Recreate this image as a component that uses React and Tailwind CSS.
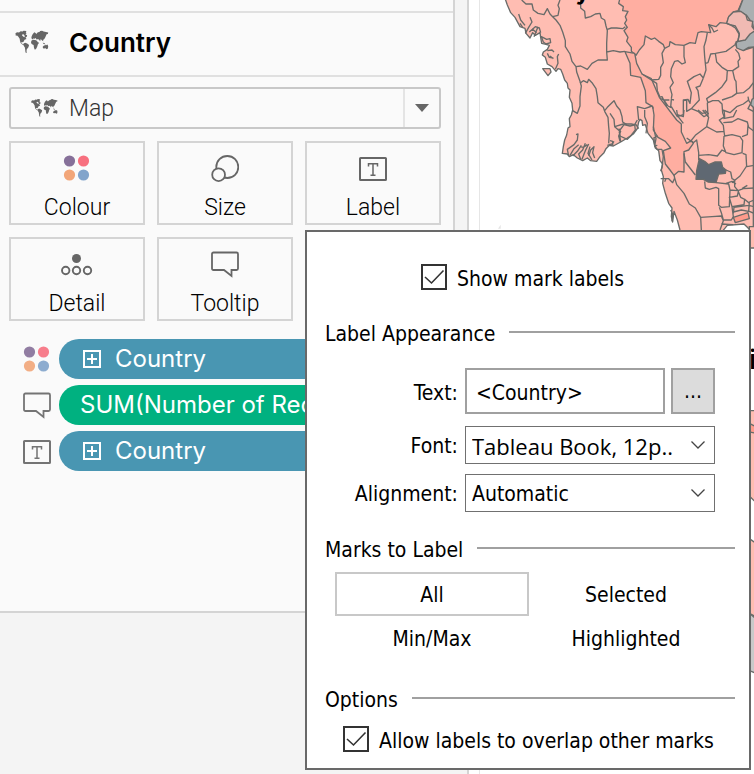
// App.jsx
import { useState } from "react";

const CARDS = [
  { label: "Colour", Icon: ColourIcon },
  { label: "Size", Icon: SizeIcon },
  { label: "Label", Icon: LabelIcon },
  { label: "Detail", Icon: DetailIcon },
  { label: "Tooltip", Icon: TooltipIcon },
];

const PILLS = [
  { text: "Country", Icon: ColourIcon, expandable: true, color: "bg-[#4996b2]" },
  { text: "SUM(Number of Records)", Icon: TooltipIcon, expandable: false, color: "bg-[#00b180]" },
  { text: "Country", Icon: LabelIcon, expandable: true, color: "bg-[#4996b2]" },
];

const MARK_MODES = ["All", "Selected", "Min/Max", "Highlighted"];

function WorldIcon({ className }) {
  return (
    <svg viewBox="44 94 104 74" className={className} fill="#666" aria-hidden="true">
      <path
        fillRule="evenodd"
        d="M45 104l5-3 6 1 5-4 6 1 3-3 9 1-2 4 2 3-3 4 5 2-1 5-4 2 3 5-6 2-2 5-3 3-4-1-1 3 4 3 4 1 1 3-6-2-5-5-2-6-1-7-4-6-4-4-4 1zM67 107l4 1 3 5-2 3-4-3-3-3z"
      />
      <path d="M70 136l5-3 6 3 6 4-2 7-5 6-1 6 1 6-4-2-1-8-1-7-4-6z" />
      <path d="M94 119l1-6 3-6 5-6 4 2 2 3 5-5 5-1 2-3 6-1 5 3 7 1 7 2-1 4-4 1-2 5-2 4-3 6-4 3 1 4-4-3-4-4-2 7-3-5-4-2-3 2-4-5-3 2-4-1-3 3z" />
      <path d="M94 127l5-3 7 1 5 2 3 5 4 1-4 6-2 7-4 7-4 1-2-6-1-8-5-2-3-4z" />
      <path d="M129 146l4-4 4-1 2-2 2 2 3-2 2 6-1 6-4 2-3-3-5 1-3-1zM129 133l5 1 3 4-5-1z" />
    </svg>
  );
}

function ColourIcon() {
  return (
    <svg width="28" height="28" viewBox="0 0 28 28" aria-hidden="true">
      <circle cx="6.500" cy="7" r="5.6" fill="#867099" />
      <circle cx="20.500" cy="7" r="5.6" fill="#f7707f" />
      <circle cx="6.500" cy="21" r="5.6" fill="#f2a679" />
      <circle cx="20.500" cy="21" r="5.6" fill="#82a4cb" />
    </svg>
  );
}

function SizeIcon() {
  return (
    <svg width="28" height="28" viewBox="0 0 28 28" fill="#fafafa" stroke="#666" strokeWidth="1.8" aria-hidden="true">
      <circle cx="16.3" cy="13" r="11" />
      <circle cx="7.6" cy="20.700" r="6.4" />
    </svg>
  );
}

function LabelIcon() {
  return (
    <svg width="28" height="28" viewBox="0 0 28 28" fill="none" stroke="#666" aria-hidden="true">
      <rect x="1" y="4" width="26" height="22" rx="0.6" strokeWidth="2" />
      <path d="M9.500 12.500V9.800H18.500V12.500M14 9.800V21M11.500 21.200H16.500" strokeWidth="1.5" />
    </svg>
  );
}

function DetailIcon() {
  return (
    <svg width="32" height="28" viewBox="0 0 32 28" fill="none" stroke="#666" strokeWidth="1.9" aria-hidden="true">
      <circle cx="15.500" cy="8.500" r="4.500" fill="#666" stroke="none" />
      <circle cx="4.700" cy="20.500" r="3.700" />
      <circle cx="15.500" cy="20.500" r="3.700" />
      <circle cx="26.500" cy="20.500" r="3.700" />
    </svg>
  );
}

function TooltipIcon() {
  return (
    <svg width="28" height="28" viewBox="0 0 28 28" fill="none" stroke="#666" strokeWidth="1.8" aria-hidden="true">
      <path d="M2.500 2.500H25.500Q27 2.500 27 4V18.500Q27 20 25.500 20H20.500V26L13 20H2.500Q1 20 1 18.500V4Q1 2.500 2.500 2.500Z" />
    </svg>
  );
}

function ExpandIcon() {
  return (
    <svg width="18" height="18" viewBox="0 0 18 18" fill="none" stroke="#fff" strokeWidth="2" className="shrink-0" aria-hidden="true">
      <rect x="1" y="1" width="16" height="16" />
      <path d="M4 9H14M9 4V14" />
    </svg>
  );
}

function MarksCard() {
  return (
    <section className="border-r-2 border-b-2 border-[#d4d4d4] bg-[#fafafa] font-[Inter,sans-serif] pb-[140px]">
      <div className="h-[11px]" />
      <h2 className="flex items-center gap-5 border-y-2 border-[#e0e0e0] pb-1 pl-[15px] h-[66px] text-[26px] font-semibold text-black">
        <WorldIcon className="w-[34px] h-6" />
        Country
      </h2>

      <div className="pt-[10px] px-[9px] pr-3">
        <button className="flex h-[42px] w-full items-center rounded-[3px] border-2 border-[#c8c8c8] font-[Roboto,sans-serif] text-[23px] font-light text-[#333]">
          <WorldIcon className="ml-5 mr-[11px] w-[27px] h-5" />
          <span className="flex-1 pt-[2px] text-left">Map</span>
          <span className="flex h-full w-9 items-center justify-center border-l-2 border-[#e4e4e4]">
            <svg width="14" height="8" viewBox="0 0 14 8" fill="#666" aria-hidden="true">
              <path d="M0 0H14L7 8Z" />
            </svg>
          </span>
        </button>

        <div className="mt-3 grid grid-cols-3 gap-3">
          {CARDS.map(({ label, Icon }) => (
            <button
              key={label}
              className="flex h-[84px] flex-col items-center border-2 border-[#d4d4d4] pt-[11px] font-[Roboto,sans-serif] text-[23px] leading-7 font-light text-black"
            >
              <Icon />
              <span className="mt-3">{label}</span>
            </button>
          ))}
        </div>

        <ul className="mt-[18px] space-y-[6px] pl-[14px]">
          {PILLS.map(({ text, Icon, expandable, color }, i) => (
            <li key={i} className="flex items-center gap-2">
              <span className="shrink-0 opacity-90">
                <Icon />
              </span>
              <button className={`${color} flex h-10 min-w-0 flex-1 items-center gap-[14px] rounded-full text-[24px] text-white ${expandable ? "pl-6" : "pl-[21px]"}`}>
                {expandable && <ExpandIcon />}
                <span className="truncate">{text}</span>
              </button>
            </li>
          ))}
        </ul>
      </div>
    </section>
  );
}

function RegionMap() {
  return (
    <svg viewBox="30 0 822 2322" preserveAspectRatio="xMinYMin slice" className="absolute inset-0 h-full w-full" aria-hidden="true">
      <g fill="#ffbdb2" stroke="#696b69" strokeWidth="4" strokeLinejoin="round">
        {/* mainland */}
        <path d="M105 -5L112 15 122 38 135 52 150 80 165 85 168 100 180 114 188 98 196 106 210 98 212 112 215 130 228 133 238 136 232 148 220 156 217 165 226 172 232 192 246 200 258 214 264 206 272 208 278 222 284 240 292 250 294 264 300 270 298 292 306 310 308 330 304 345 298 356 300 380 294 384 290 405 284 420 280 440 277 460 292 462 298 470 310 464 322 474 338 482 352 474 362 482 380 484 390 470 402 458 408 446 418 436 430 438 452 426 472 414 490 402 502 386 506 366 510 358 516 362 518 376 526 374 534 400 550 420 556 444 566 452 570 482 578 492 574 510 580 530 578 550 586 580 596 610 606 624 604 650 608 666 612 634 622 660 630 690 640 710H850V-5Z" />
        <path d="M218 206L240 206 243 216 234 227Z" />

        {/* darker regions */}
        <path fill="#ffaea1" d="M450 -5L446 10 460 20 458 32 474 34 466 50 470 60 464 70 472 82 462 92 474 112 470 124 484 142 484 154 498 166 508 150 522 134 526 108 544 118 554 114 566 124 580 134 584 145 598 138 600 125 616 134 642 136 660 128 676 130 684 98 694 95 722 98 716 74 738 80 750 68 770 70 776 50 790 36 804 32 820 -5Z" />
        <path fill="#ffaea1" d="M465 155L494 160 500 190 516 222 544 236 556 264 568 292 620 360 634 372 634 396 650 430 664 422 670 430 656 450 642 455 642 516 626 514 612 526 600 510 586 492 580 452 602 444 586 424 564 412 550 390 552 345 548 320 528 308 526 272 512 232 482 226 480 190Z" />
        <path fill="#aaafb1" d="M820 -5L806 32 830 46 848 72 856 110V140L822 150 800 142 796 130H860V-5Z" />
        <path fill="#aaafb1" d="M860 140L836 142 820 152 800 144 798 126 824 118 850 90 860 92Z" />
        <path fill="#f0bab3" d="M770 70L776 50 790 36 812 34 828 46 832 60 848 64 846 80 855 92 840 102 826 120 804 124 808 100 796 78 780 74Z" />
        <path fill="#5f6872" d="M688 476L704 484 716 494 734 486 754 486 758 502 768 510 766 520 746 522 738 548 714 546 700 538 678 538 680 512Z" />
        <path fill="#ff9b8b" d="M790 652L834 638 838 656 796 668Z" />
        <path fill="#fff" stroke="#696b69" d="M752 700L772 676 822 672 838 688 838 710Z" />
        <path fill="#aaafb1" d="M860 290L846 298 842 314 850 322H860Z" />
      </g>

      {/* inner borders */}
      <g fill="none" stroke="#696b69" strokeWidth="4" strokeLinejoin="round">
        <path d="M155 0L168 12 186 12 190 30 204 40 222 44 232 26 240 42 248 50 264 46 268 26 264 16 270 0M248 50L258 60 270 76 278 96 286 122 286 140 300 162 306 184 318 200 320 216 330 244 334 258 330 290 330 318 322 340 308 332" />
        <path d="M332 0L332 24 344 34 346 54 362 50 376 42 390 40 394 54 404 60 408 78 412 92 410 130 410 156 412 180 384 180 366 190 352 208 332 198 318 200M412 88L424 84 440 84 458 86 466 80M410 156L430 152 450 156 465 154M330 250L340 242 352 248 356 238 366 248 378 266 382 290 384 308 400 322 404 334 414 352 416 380 418 400 416 430M404 332L412 322 432 302 440 318 450 330 456 350 458 366 470 374" />
        <path d="M146 42L152 60 165 76M150 70L158 82M180 52L186 66 176 82 166 100M178 96L196 80 208 84 212 98M186 86L200 98M192 110L204 80M214 110L230 118 240 116 242 128 228 132 220 126ZM232 152L246 150 252 156M232 160L238 172 250 174M240 168L250 176M256 208L264 190 262 170 266 162" />
        <path d="M318 404L324 402 322 420 312 434 292 448 296 468M326 434L312 446 300 466M334 436L322 454 308 468M346 430L338 450 326 462 332 478M356 432L346 452 336 478M330 440L340 442 352 434M356 468L362 450 372 440 368 458 374 474M360 440L354 460 366 480M412 436L426 432 432 424" />
        <path d="M446 386L452 394 446 408 450 424M450 390L462 374 480 378 498 374 506 386M506 360L502 320 524 326 546 318 550 326M452 426L448 396" />
        <path d="M516 222L544 240 566 238 572 226 572 202 580 188 576 160 584 145M544 240L560 250 562 272 572 296 582 300 594 318 602 322 604 298 612 300M642 138L642 170 646 188 636 192 624 182 614 184 604 206 602 230 610 248 600 262 606 284 604 296M568 292L576 290 590 318M582 300L598 300M604 320L622 350 640 344 640 300 654 298 660 310 664 278 652 244 672 230 690 222 700 234M640 302L650 300 650 334 664 326 684 334 702 350 712 345M664 326L688 300 684 272 678 262 690 258 700 234M712 98L708 120 702 140 704 170 706 190 714 188 722 162 736 160 768 154 782 144 798 132M706 190L708 210 700 234M736 160L740 186 756 202 772 212 788 212 806 200 804 184 810 176 806 160 796 148M772 212L770 240 756 260 736 278 710 296 714 308 728 302 746 302 756 312 758 338 764 354M788 212L794 238 798 244 800 280 786 290 756 300M800 280L820 278 838 264 852 246M758 330L780 338 800 320 820 312 836 300 834 290M712 308L714 350M760 356L790 350 800 330M834 298L842 310 834 326 850 334M716 74L726 84 732 96 744 90M770 70L784 76 796 84 808 104 804 120 796 134" />
      </g>
      <g transform="translate(420 330)" fill="none" stroke="#696b69" strokeWidth="4" strokeLinejoin="round">
        <path d="M0 10L12 28 14 50 28 62 30 78 52 88 62 78 76 60 74 44 82 30M14 50L40 42 64 42 74 44M108 70L112 40 104 20 104 0M130 50L138 86 134 108 142 118 156 118M130 84L144 78M156 118L160 140 156 172 152 184M152 206L176 206 188 218 194 204 192 195M194 204L200 224 222 250 238 282 256 294 272 322M164 215L168 206M222 130L226 156 256 195M230 84L250 98 260 90 266 128 266 150M200 0L202 14 220 20 222 0M200 14L220 40M278 0L296 22 290 50 256 76 240 96M296 12L284 0M290 50L320 66 342 64 340 46 328 30 344 20 342 0M340 38L366 36 384 26 412 36 416 52 432 64M342 64L344 78 366 74 390 80 398 92 396 128 372 134 348 128 340 108 342 78M266 136L296 134 322 138 336 120 344 124M396 80L412 74 414 44M398 130L408 134 410 170 432 166M410 168L390 198 378 208 366 218M348 180L362 186 366 206 374 210 374 230 384 242 400 236 432 234M318 218L356 222 360 240 358 290 334 292 326 286 326 236 318 232 298 238 286 234 284 214M348 220L366 214 378 222M360 240L384 242 392 262 404 268 402 284 366 290 358 262 382 258 386 240M366 290L370 320 364 330 340 330 334 308 328 292M370 310L372 292 416 286 432 290M370 306L394 300 416 304 418 276 432 270M418 304L432 310M272 322L306 320 334 318 340 332 330 360M272 322L274 360M334 342L370 344M404 268L418 280M396 236L412 226" />
        <path d="M132 84L134 108 142 106M182 300L188 312 186 334M0 92L8 94 8 106M264 0L276 10 290 8" />
      </g>

      {/* strip of coast further south */}
      <g fill="#ffbdb2" stroke="#696b69" strokeWidth="4">
        <path d="M838 680V744H858V680Z" />
        <path d="M838 1232V1488L858 1508V1232Z" />
        <path fill="#ff9b8b" d="M838 1270L858 1280V1300L838 1296Z" />
        <path d="M838 1616L858 1630V1850L838 1840Z" />
        <path fill="#c9c9c9" d="M838 1840L858 1856V2020L838 2012Z" />
      </g>
      <path d="M84 686L92 674 92 686Z" fill="#e4e4e4" />
      <g fill="#000" fontFamily="Inter, sans-serif" fontWeight="600" fontSize="78">
        <text x="316" y="-3">y</text>
        <text x="838" y="1107">i</text>
      </g>
    </svg>
  );
}

function CheckField({ label, className }) {
  return (
    <label className={`flex items-center gap-[10px] ${className}`}>
      <span className="grid">
        <input type="checkbox" defaultChecked className="peer col-start-1 row-start-1 size-[26px] appearance-none border-2 border-[#333] bg-white" />
        <svg
          viewBox="0 0 26 26"
          className="pointer-events-none invisible col-start-1 row-start-1 size-[26px] peer-checked:visible"
          fill="none"
          stroke="#333"
          strokeWidth="1.600"
          aria-hidden="true"
        >
          <path d="M4 13L10.500 19L22.500 6.500" />
        </svg>
      </span>
      <span className="pt-1">{label}</span>
    </label>
  );
}

function SectionTitle({ children, className }) {
  return (
    <h3 className={`flex h-7 items-center gap-[14px] ${className}`}>
      <span className="pt-1">{children}</span>
      <span className="h-[2px] flex-1 bg-[#a0a0a0]" />
    </h3>
  );
}

function SelectField({ id, value, className }) {
  return (
    <div className="grid items-center">
      <select id={id} className={`col-start-1 row-start-1 h-[38px] w-full appearance-none border border-[#707070] bg-white pt-[2px] pl-[6px] ${className}`}>
        <option>{value}</option>
      </select>
      <svg width="14" height="8" viewBox="0 0 14 8" className="pointer-events-none col-start-1 row-start-1 mr-[10px] justify-self-end" fill="none" stroke="#444" strokeWidth="1.300" aria-hidden="true">
        <path d="M0.500 0.500L7 7L13.500 0.500" />
      </svg>
    </div>
  );
}

function LabelPopup() {
  const [mode, setMode] = useState("All");

  return (
    <div className="absolute top-[230px] left-[305px] w-[446px] border-2 border-[#696969] bg-white pt-8 pr-[14px] pb-4 pl-[18px] font-['DejaVu_Sans_Condensed','DejaVu_Sans',sans-serif] text-[21px] leading-7 text-black">
      <CheckField label="Show mark labels" className="h-[26px] pl-24" />

      <SectionTitle className="mt-7">Label Appearance</SectionTitle>
      <div className="mt-[22px] grid grid-cols-[133px_250px] items-center gap-x-[7px]">
        <label htmlFor="label-text" className="pt-1 text-right">Text:</label>
        <div className="flex gap-[6px]">
          <input id="label-text" defaultValue="<Country>" className="h-[46px] w-0 flex-1 border-2 border-[#a0a0a0] pt-1 pl-[9px]" />
          <button aria-label="Edit text" className="h-[46px] w-11 border-2 border-[#a0a0a0] bg-[#dcdcdc]">...</button>
        </div>
        <label htmlFor="label-font" className="mt-3 pt-[2px] text-right">Font:</label>
        <div className="mt-3">
          <SelectField id="label-font" value="Tableau Book, 12p.." className="font-['Open_Sans',sans-serif] text-[22px]" />
        </div>
        <label htmlFor="label-align" className="mt-[10px] pt-[2px] text-right">Alignment:</label>
        <div className="mt-[10px]">
          <SelectField id="label-align" value="Automatic" className="" />
        </div>
      </div>

      <SectionTitle className="mt-[22px]">Marks to Label</SectionTitle>
      <div className="mt-[10px] grid grid-cols-2 pr-3 pl-[10px]">
        {MARK_MODES.map((m) => (
          <button
            key={m}
            onClick={() => setMode(m)}
            className={`h-11 border-2 pt-[2px] ${m === mode ? "border-[#c8c8c8]" : "border-transparent"}`}
          >
            {m}
          </button>
        ))}
      </div>

      <SectionTitle className="mt-6">Options</SectionTitle>
      <CheckField label="Allow labels to overlap other marks" className="mt-[14px] h-[26px] pl-[18px]" />
    </div>
  );
}

export default function App() {
  return (
    <div className="relative flex min-h-screen overflow-hidden bg-[#f4f4f4]">
      <div className="w-[455px] shrink-0">
        <MarksCard />
      </div>
      <main className="ml-3 flex flex-1 border-l-2 border-[#d4d4d4] bg-white pl-[10px]">
        <div className="relative flex-1 overflow-hidden border-l border-[#e6e6e6]">
          <RegionMap />
        </div>
      </main>
      <LabelPopup />
    </div>
  );
}
